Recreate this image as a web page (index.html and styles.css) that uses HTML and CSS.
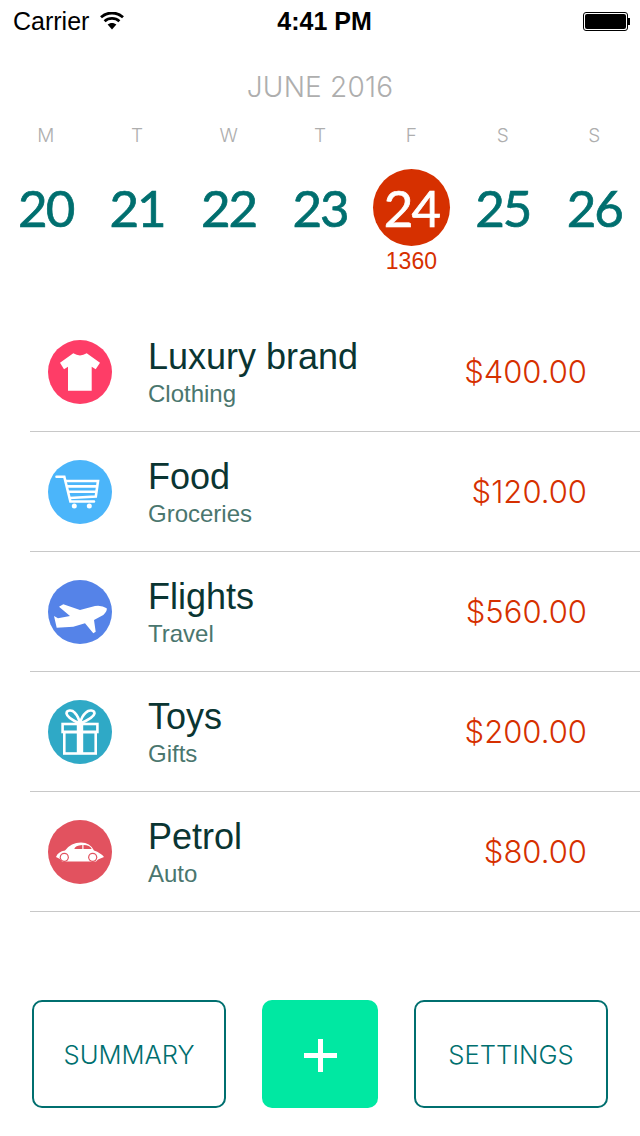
FILE: index.html
```html
<!DOCTYPE html>
<html lang="en">
<head>
  <meta charset="UTF-8" />
  <meta name="viewport" content="width=device-width, initial-scale=1.0" />
  <title>Expenses</title>
  <link rel="stylesheet" href="styles.css">
</head>
<body>
  <div class="status-bar">
    <div class="status-left">
      <span class="carrier">Carrier</span>
      <svg class="wifi" width="26" height="19" viewBox="0 1 26 19">
        <path d="M13 18.5 L8.6 13.6 C11 11.4 15 11.4 17.4 13.6 Z" fill="#000"/>
        <path d="M5.6 10.2 C9.8 6.4 16.2 6.4 20.4 10.2" fill="none" stroke="#000" stroke-width="2.8"/>
        <path d="M2 6.2 C8.2 .6 17.8 .6 24 6.2" fill="none" stroke="#000" stroke-width="2.8"/>
      </svg>
    </div>
    <div class="status-time">4:41 PM</div>
    <div class="status-right">
      <div class="battery"><div class="battery-level"></div></div>
      <div class="battery-tip"></div>
    </div>
  </div>

  <div class="month">JUNE 2016</div>

  <div class="week">
    <div class="day"><div class="day-name">M</div><div class="day-num">20</div></div>
    <div class="day"><div class="day-name">T</div><div class="day-num">21</div></div>
    <div class="day"><div class="day-name">W</div><div class="day-num">22</div></div>
    <div class="day"><div class="day-name">T</div><div class="day-num">23</div></div>
    <div class="day active"><div class="day-name">F</div><div class="day-num">24</div><div class="day-total">1360</div></div>
    <div class="day"><div class="day-name">S</div><div class="day-num">25</div></div>
    <div class="day"><div class="day-name">S</div><div class="day-num">26</div></div>
  </div>

  <div class="list">
    <div class="row">
      <svg class="icon" viewBox="0 0 64 64">
        <circle cx="32" cy="32" r="32" fill="#fe3d67"/>
        <path d="M25.3 13.3 Q32 17.5 38.7 13.3 L52 22.7 L47.7 29.3 L43.7 26.7 V50.7 H20 V26.7 L16 29.3 L12 22.7 Z" fill="#fff"/>
      </svg>
      <div class="info"><div class="name">Luxury brand</div><div class="cat">Clothing</div></div>
      <div class="amount">$400.00</div>
    </div>
    <div class="row">
      <svg class="icon" viewBox="0 0 64 64">
        <circle cx="32" cy="32" r="32" fill="#4bb5fa"/>
        <path d="M8.5 16.8 H16.3 L22.4 41.5 H46" fill="none" stroke="#fff" stroke-width="2.6" stroke-linecap="round"/>
        <path d="M18 21 H50 L47.8 36.6 L21.5 38" fill="none" stroke="#fff" stroke-width="2.6"/>
        <path d="M19 26.4 H49 M20.5 31.8 H48.4" stroke="#fff" stroke-width="2.6"/>
        <circle cx="26.3" cy="46" r="2.5" fill="#fff"/>
        <circle cx="41.3" cy="46" r="2.5" fill="#fff"/>
      </svg>
      <div class="info"><div class="name">Food</div><div class="cat">Groceries</div></div>
      <div class="amount">$120.00</div>
    </div>
    <div class="row">
      <svg class="icon" viewBox="0 0 64 64">
        <circle cx="32" cy="32" r="32" fill="#5583e8"/>
        <path d="M58.7 28.3 Q54 25 47 26 L32 30 L15.3 24.3 L11 26.7 L22 36 L10 38.3 L6 36 L8.7 47.7 L25.3 46.7 L37 43.3 L45.3 53.3 L47.7 51.7 L46 40 L55.3 35 Q59.5 31 58.7 28.3 Z" fill="#fff"/>
      </svg>
      <div class="info"><div class="name">Flights</div><div class="cat">Travel</div></div>
      <div class="amount">$560.00</div>
    </div>
    <div class="row">
      <svg class="icon" viewBox="0 0 64 64">
        <circle cx="32" cy="32" r="32" fill="#2fa9c6"/>
        <g fill="none" stroke="#fff" stroke-width="2.6">
          <rect x="14.6" y="24" width="34.8" height="8"/>
          <rect x="16.3" y="32" width="31.4" height="21.5"/>
          <path d="M32 23.5 C26 21 19 17 18.5 13.5 C18.5 10 24 9.5 26.5 12.5 C29 15 31 19 32 23.5 C33 19 35 15 38 12.5 C41 9.5 46.5 10 46.5 13.5 C46 17 38 21 32 23.5 Z"/>
        </g>
        <rect x="28.8" y="24" width="6.4" height="30" fill="#fff"/>
      </svg>
      <div class="info"><div class="name">Toys</div><div class="cat">Gifts</div></div>
      <div class="amount">$200.00</div>
    </div>
    <div class="row">
      <svg class="icon" viewBox="0 0 64 64">
        <circle cx="32" cy="32" r="32" fill="#e2525f"/>
        <path d="M8 37 Q10 31.5 17 30.5 Q23 22.5 33 22.5 Q42 22.5 46 30.5 Q53 33 56 37 L50 39.5 L48 41.5 H14 L12 39 Z" fill="#fff"/>
        <path d="M26.3 29 Q27 25.5 34.3 25 V29 Z M35.5 25 Q42 25 43.7 29 H35.5 Z" fill="#e2525f"/>
        <circle cx="16.3" cy="37.3" r="4.6" fill="#e2525f"/>
        <circle cx="44.7" cy="37.3" r="4.6" fill="#e2525f"/>
        <circle cx="16.3" cy="37.3" r="3.4" fill="#fff"/>
        <circle cx="44.7" cy="37.3" r="3.4" fill="#fff"/>
      </svg>
      <div class="info"><div class="name">Petrol</div><div class="cat">Auto</div></div>
      <div class="amount">$80.00</div>
    </div>
  </div>

  <div class="actions">
    <div class="btn">SUMMARY</div>
    <div class="btn-add">
      <svg class="plus" width="33" height="33" viewBox="0 0 33 33"><path d="M14 0 H19 V14 H33 V19 H19 V33 H14 V19 H0 V14 H14 Z" fill="#fff"/></svg>
    </div>
    <div class="btn">SETTINGS</div>
  </div>
</body>
</html>
```

FILE: styles.css
```css
* {
  margin: 0;
  padding: 0;
  box-sizing: border-box;
}
body {
  background: #fff;
  width: 640px;
  height: 1136px;
  overflow: hidden;
  font-family: 'Liberation Sans', Arial, sans-serif;
  display: flex;
  flex-direction: column;
}
.status-bar {
  height: 42px;
  flex-shrink: 0;
  padding: 0 10px 0 13px;
  display: grid;
  grid-template-columns: 1fr auto 1fr;
  align-items: center;
  color: #000;
  font-size: 25px;
}
.status-left {
  display: flex;
  align-items: center;
  gap: 10px;
}
.status-time {
  margin-left: 6px;
  font-weight: bold;
}
.status-right {
  display: flex;
  align-items: center;
  justify-content: flex-end;
}
.battery {
  width: 45px;
  height: 19px;
  border: 1px solid #000;
  border-radius: 3px;
  padding: 1px;
}
.battery-level {
  height: 100%;
  background: #000;
  border-radius: 2px;
}
.battery-tip {
  width: 2px;
  height: 7px;
  background: #000;
}
.month {
  margin-top: 28px;
  text-align: center;
  font-family: Inter, sans-serif;
  font-weight: 300;
  font-size: 28px;
  letter-spacing: .2px;
  line-height: 34px;
  color: #aeaeae;
}
.week {
  margin-top: 19px;
  display: grid;
  grid-template-columns: repeat(7, 1fr);
  height: 189px;
  flex-shrink: 0;
}
.day {
  display: flex;
  flex-direction: column;
  align-items: center;
}
.day-name {
  font-family: Inter, sans-serif;
  font-weight: 300;
  font-size: 19px;
  line-height: 26px;
  color: #aeaeae;
}
.day-num {
  margin-top: 20px;
  width: 77px;
  height: 77px;
  border-radius: 50%;
  display: flex;
  align-items: center;
  justify-content: center;
  font-family: Lato, sans-serif;
  font-size: 51px;
  letter-spacing: -2px;
  -webkit-text-stroke: .7px currentColor;
  color: #006f6f;
}
.active .day-num {
  background: #d63000;
  color: #fff;
}
.day-total {
  font-size: 23px;
  line-height: 30px;
  color: #d63000;
}
.list {
  margin-left: 30px;
}
.row {
  height: 120px;
  padding: 0 53px 0 18px;
  border-bottom: 1px solid #c8c8c8;
  display: flex;
  align-items: center;
}
.icon {
  width: 64px;
  height: 64px;
  flex-shrink: 0;
}
.info {
  margin: 4px 0 0 36px;
  flex: 1;
}
.name {
  font-size: 36px;
  line-height: 40px;
  margin-top: -3px;
  color: #0a3532;
}
.cat {
  font-size: 24px;
  line-height: 28px;
  margin-top: 3px;
  color: #4a766e;
}
.amount {
  font-family: Inter, sans-serif;
  font-weight: 300;
  font-size: 31px;
  color: #d63000;
}
.actions {
  margin-top: 88px;
  padding: 0 32px;
  display: flex;
  justify-content: space-between;
}
.btn {
  width: 194px;
  height: 108px;
  border: 2px solid #006f6f;
  border-radius: 10px;
  display: flex;
  align-items: center;
  justify-content: center;
  font-family: Inter, sans-serif;
  font-weight: 300;
  font-size: 25.6px;
  color: #006f6f;
}
.btn-add {
  width: 116px;
  height: 108px;
  background: #00e8a2;
  border-radius: 10px;
  display: flex;
  align-items: center;
  justify-content: center;
}
.plus {
  margin-top: 2px;
}
```
